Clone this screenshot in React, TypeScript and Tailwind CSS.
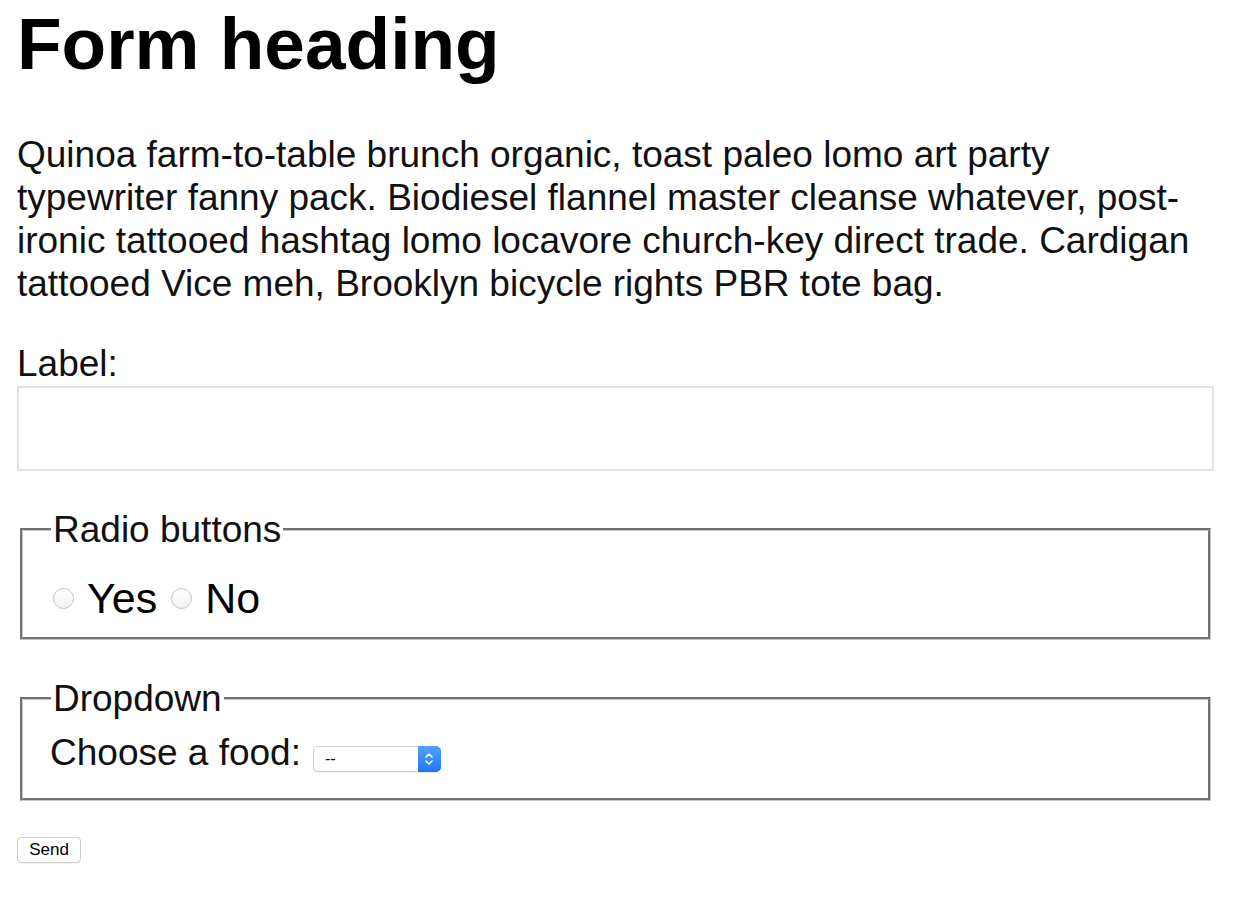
import React from 'react';

function Radio({ name, label }: { name: string; label: string }) {
  return (
    <label className="flex items-center">
      <input
        type="radio"
        name={name}
        className="appearance-none w-[21px] h-[21px] rounded-full border border-[#c4c4c4] bg-gradient-to-b from-white to-[#f1f1f1] m-0"
      />
      <span className="ml-[13px] mr-[14px] text-[43px] leading-[48px]">{label}</span>
    </label>
  );
}

export default function App() {
  return (
    <div className="min-h-screen bg-white text-black font-['Liberation_Sans',Arial,sans-serif] pl-[17px] pr-[24px]">
      <h1 className="pt-[7px] text-[73px] leading-[73px] font-bold">Form heading</h1>

      <p className="mt-[53px] text-[37px] leading-[43px] text-[#111]">
        Quinoa farm-to-table brunch organic, toast paleo lomo art party typewriter fanny pack. Biodiesel flannel
        master cleanse whatever, post-ironic tattooed hashtag lomo locavore church-key direct trade. Cardigan
        tattooed Vice meh, Brooklyn bicycle rights PBR tote bag.
      </p>

      <form onSubmit={(e) => e.preventDefault()}>
        <label htmlFor="field" className="block mt-[36px] text-[37px] leading-[45px] text-[#111]">
          Label:
        </label>
        <input
          id="field"
          type="text"
          className="block w-full h-[85px] border-2 border-[#e2e2e2] bg-white px-2 text-[37px] outline-none"
        />

        <fieldset className="mt-[37px] mx-[3px] border-[3px] [border-style:groove] border-[#c6c6c6] pl-[28px] pr-[28px] pt-[23px] pb-[15px]">
          <legend className="px-[2px] text-[37px] leading-[43px] text-[#111]">Radio buttons</legend>
          <div className="flex items-center h-[48px] ml-[2px]">
            <Radio name="choice" label="Yes" />
            <Radio name="choice" label="No" />
          </div>
        </fieldset>

        <fieldset className="mt-[37px] mx-[3px] border-[3px] [border-style:groove] border-[#c6c6c6] pl-[28px] pr-[28px] pt-[11px] pb-[24px]">
          <legend className="px-[2px] text-[37px] leading-[43px] text-[#111]">Dropdown</legend>
          <div className="flex items-start h-[43px] -ml-[1px]">
            <label htmlFor="food" className="text-[37px] leading-[43px] text-[#111]">
              Choose a food:
            </label>
            <div className="relative ml-[12px] mt-[15px] w-[128px] h-[26px]">
              <select
                id="food"
                className="appearance-none w-full h-full rounded-[5px] border border-[#cfcfcf] bg-white pl-[11px] text-[16px] leading-[24px] shadow-[0_1px_1px_rgba(0,0,0,0.08)] outline-none"
              >
                <option>--</option>
                <option>Pizza</option>
                <option>Tacos</option>
              </select>
              <div className="pointer-events-none absolute right-0 top-0 h-full w-[23px] rounded-r-[5px] bg-gradient-to-b from-[#51a3fb] to-[#1d77f4] flex items-center justify-center">
                <svg width="10" height="16" viewBox="0 0 10 16" fill="none" stroke="white" strokeWidth="1.6" strokeLinecap="round" strokeLinejoin="round">
                  <path d="M2 6 L5 3 L8 6" />
                  <path d="M2 10 L5 13 L8 10" />
                </svg>
              </div>
            </div>
          </div>
        </fieldset>

        <button
          type="submit"
          className="mt-[36px] w-[64px] h-[26px] rounded-[4px] border border-[#d0d0d0] bg-white text-[17px] leading-[24px] text-black shadow-[0_1px_1px_rgba(0,0,0,0.06)]"
        >
          Send
        </button>
      </form>
    </div>
  );
}
